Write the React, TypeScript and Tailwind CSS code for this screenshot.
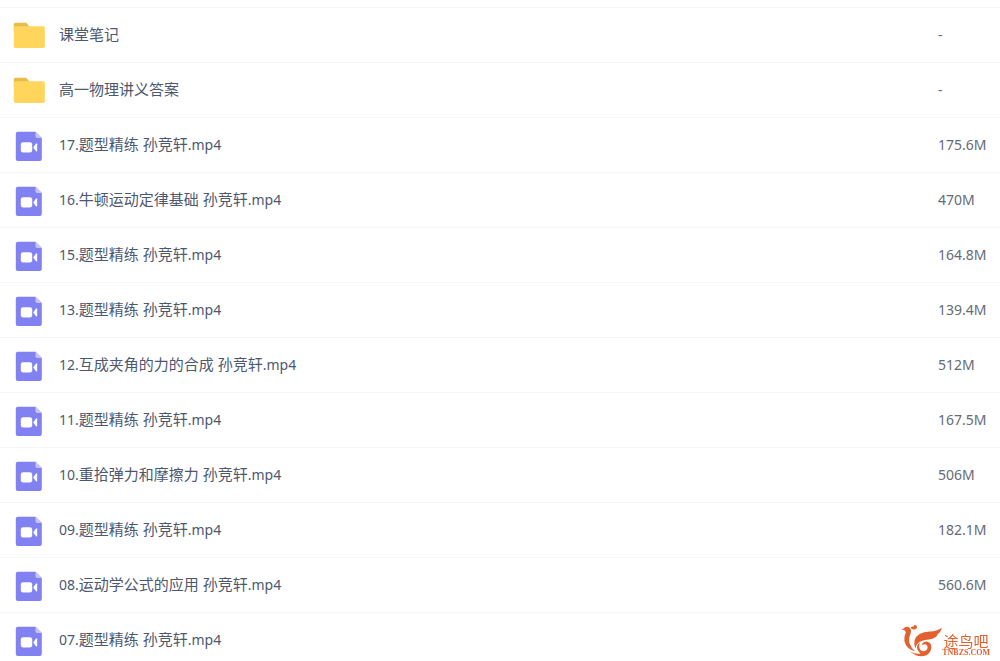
import React from 'react';

type Entry = {
  kind: 'folder' | 'video';
  no?: string;
  title: string;
  ext?: string;
  size: string;
};

const entries: Entry[] = [
  { kind: 'folder', title: '课堂笔记', size: '-' },
  { kind: 'folder', title: '高一物理讲义答案', size: '-' },
  { kind: 'video', no: '17.', title: '题型精练 孙竞轩', ext: '.mp4', size: '175.6M' },
  { kind: 'video', no: '16.', title: '牛顿运动定律基础 孙竞轩', ext: '.mp4', size: '470M' },
  { kind: 'video', no: '15.', title: '题型精练 孙竞轩', ext: '.mp4', size: '164.8M' },
  { kind: 'video', no: '13.', title: '题型精练 孙竞轩', ext: '.mp4', size: '139.4M' },
  { kind: 'video', no: '12.', title: '互成夹角的力的合成 孙竞轩', ext: '.mp4', size: '512M' },
  { kind: 'video', no: '11.', title: '题型精练 孙竞轩', ext: '.mp4', size: '167.5M' },
  { kind: 'video', no: '10.', title: '重拾弹力和摩擦力 孙竞轩', ext: '.mp4', size: '506M' },
  { kind: 'video', no: '09.', title: '题型精练 孙竞轩', ext: '.mp4', size: '182.1M' },
  { kind: 'video', no: '08.', title: '运动学公式的应用 孙竞轩', ext: '.mp4', size: '560.6M' },
  { kind: 'video', no: '07.', title: '题型精练 孙竞轩', ext: '.mp4', size: '' },
];

function FolderIcon() {
  return (
    <svg width="32" height="32" viewBox="0 0 32 32" aria-hidden="true">
      <path d="M0.8 5.6Q0.8 3.8 2.6 3.8H12.5Q13.6 3.8 14.2 4.7L16 7.3V13H0.8Z" fill="#e6bd4b" />
      <path d="M0.8 7.2H30Q31.8 7.2 31.8 9V27.2Q31.8 29 30 29H2.6Q0.8 29 0.8 27.2Z" fill="#ffd55b" />
    </svg>
  );
}

function VideoIcon() {
  return (
    <svg width="32" height="32" viewBox="0 0 32 32" aria-hidden="true">
      <path d="M4.8 2.8H22.5L28.8 9.1V30Q28.8 32 26.8 32H4.8Q2.8 32 2.8 30V4.8Q2.8 2.8 4.8 2.8Z" fill="#8181f2" />
      <path d="M22.5 2.8L28.8 9.1H24.3Q22.5 9.1 22.5 7.3Z" fill="#c4c4fa" />
      <rect x="7.8" y="13.2" width="11.4" height="10.4" rx="2.4" fill="#fff" />
      <path d="M20.2 18.4L22.8 14.8Q24.2 13.6 24.2 15.2V21.6Q24.2 23.2 22.8 22Z" fill="#fff" />
    </svg>
  );
}

function Watermark() {
  return (
    <div className="fixed right-[10px] bottom-1 flex items-end text-[#e2622f]">
      <svg width="41" height="32" viewBox="0 0 41 32" fill="currentColor" aria-hidden="true">
        <path d="M0 4.6Q2.6 4 3.6 2.6Q6 0.8 8.4 2.6Q11 5 9.4 9Q7.2 14.4 8.6 18.6Q10 23 14.4 26.4Q5 24 3.4 16Q2.8 12 4.6 8.6Q5.2 6.2 3.8 5.4Q2.2 4.6 0 4.6Z" />
        <path d="M9.6 3Q10.4 0.6 12.4 1.8Q12.6-0.6 14.8 0.2Q17.2 1.8 15.2 3.8Q12.8 5.6 9.6 3Z" />
        <path d="M14.4 23.4Q10.8 13.8 18.6 9Q22.4 7 29 6.6Q36 6.2 41 2.8Q39.8 7.4 36.4 9.6Q37 10.4 34.8 12Q31.8 14.2 27.8 14.4Q24 14.4 20.4 16Q15.4 18 14.4 23.4Z" />
        <path d="M19 17.6Q17 22 19.6 25.2Q23 27.4 26 24.6Q27.6 21.4 25 19.4Q22.6 18.6 20.8 20.4Q21.2 17 25.4 16.6Q30.4 17.4 30.4 22.4Q29.8 28 25 30.4Q16.6 33.2 8.8 26.2Q15 29.8 19.6 28.4Q14.6 24.6 16.6 20Q17.4 18.2 19 17.6Z" />
      </svg>
      <div className="flex flex-col items-center">
        <span className="font-['Noto_Sans_CJK_SC',sans-serif] text-[15px] leading-4">途鸟吧</span>
        <span className="font-['Liberation_Serif',serif] text-[8px] leading-2 font-bold">TNBZS.COM</span>
      </div>
    </div>
  );
}

function App() {
  return (
    <div className="overflow-hidden bg-white font-['Noto_Sans','Noto_Sans_CJK_SC',sans-serif]">
      <div className="h-2 border-b border-[#f5f6f8]" />
      <table className="w-full table-fixed border-separate border-spacing-0">
        <tbody>
          {entries.map((entry) => (
            <tr key={entry.no ?? entry.title}>
              <td className="h-[55px] border-b border-[#f5f6f8] py-0 pr-4 pl-[13px]">
                <div className="flex items-center gap-[14px]">
                  {entry.kind === 'folder' ? <FolderIcon /> : <VideoIcon />}
                  <span className="pb-[2px] text-[15px] leading-5 whitespace-nowrap text-[#4d5870]">
                    <span className="text-sm">{entry.no}</span>
                    {entry.title}
                    <span className="text-sm">{entry.ext}</span>
                  </span>
                </div>
              </td>
              <td className="w-[62px] border-b border-[#f5f6f8] p-0 text-sm text-[#666b75]">
                {entry.size}
              </td>
            </tr>
          ))}
        </tbody>
      </table>
      <Watermark />
    </div>
  );
}

export default App;
